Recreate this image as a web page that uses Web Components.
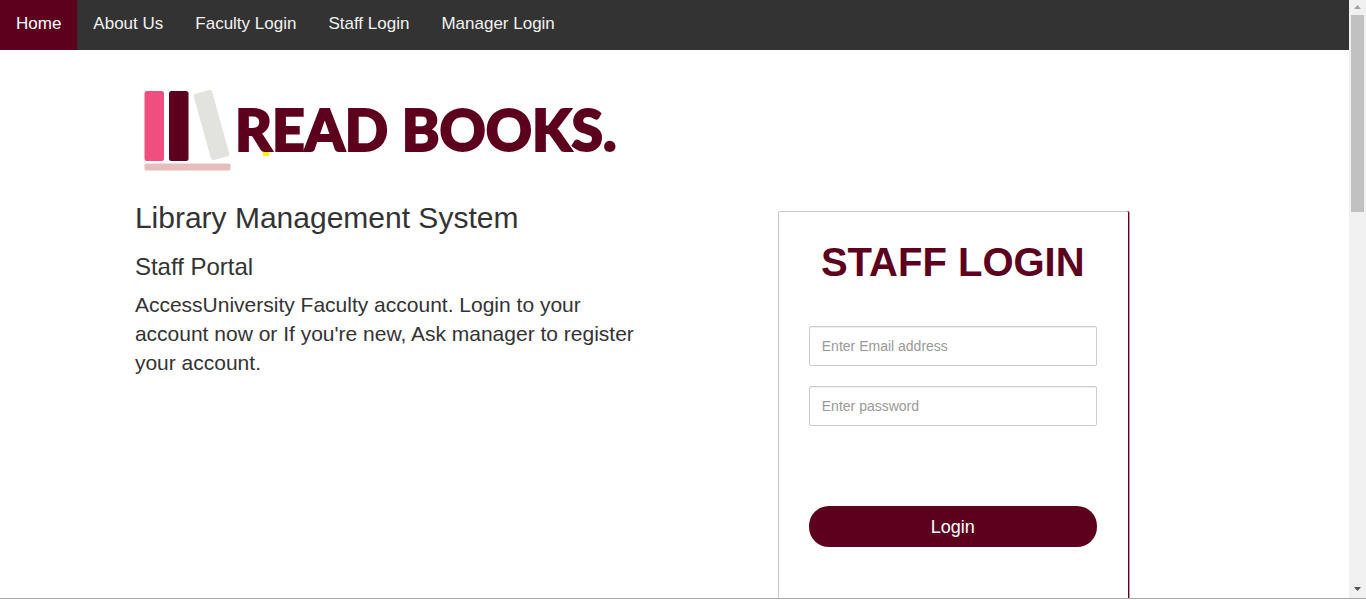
<!DOCTYPE html>
<html lang="en">
<head>
<meta charset="utf-8">
<title>Library Management System</title>
<style>
html, body { margin: 0; height: 100%; }
body { background: #fff; color: #333; font: 14px/20px "Liberation Sans", Arial, sans-serif; overflow: hidden; }
</style>
</head>
<body>
<library-page></library-page>
<script>
const define = (name, html, setup) => customElements.define(name, class extends HTMLElement {
  constructor() {
    super();
    this.attachShadow({ mode: "open" }).innerHTML = html;
  }
  connectedCallback() { if (setup) setup(this, this.shadowRoot); }
});

define("nav-link", `
<style>
:host { display: block; }
a { display: block; padding: 12px 16px 14px; color: #f2f2f2; font-size: 17px; line-height: 24px; text-decoration: none; }
:host([active]) a { background: #5c001d; color: #fff; }
</style>
<a href="#"><slot></slot></a>`);

define("top-nav", `
<style>
:host { display: block; background: #333; }
nav { display: flex; }
</style>
<nav>
  <nav-link active>Home</nav-link>
  <nav-link>About Us</nav-link>
  <nav-link>Faculty Login</nav-link>
  <nav-link>Staff Login</nav-link>
  <nav-link>Manager Login</nav-link>
</nav>`);

define("brand-logo", `
<style>
:host { display: block; }
svg { display: block; overflow: visible; }
text { font: 900 57px Lato, sans-serif; fill: #5c001d; stroke: #5c001d; stroke-width: 2px; }
</style>
<svg width="500" height="100" viewBox="0 0 500 100" role="img" aria-label="Read Books">
  <rect x="9.500" y="11" width="19.500" height="70" rx="2.500" fill="#f04e7f"/>
  <rect x="34" y="11" width="19.500" height="70" rx="2.500" fill="#5c001d"/>
  <rect x="-9.500" y="-34.500" width="19" height="69" rx="2.500" fill="#e2e2de" transform="translate(76.500 45) rotate(-15.500)"/>
  <rect x="9.500" y="83.500" width="86" height="7" rx="1.500" fill="#e6bfbc"/>
  <rect x="128" y="71" width="6" height="5" fill="#fff200"/>
  <text x="100" y="71">READ BOOKS.</text>
</svg>`);

define("portal-intro", `
<style>
:host { display: block; }
h1, h2, p { margin: 0; font-weight: 400; }
h1 { font-size: 30px; line-height: 33px; }
h2 { margin-top: 20px; font-size: 24px; line-height: 26px; }
p { margin-top: 10px; font-size: 21px; line-height: 29px; }
</style>
<h1>Library Management System</h1>
<h2>Staff Portal</h2>
<p>AccessUniversity Faculty account. Login to your account now or If you're new, Ask manager to register your account.</p>`);

define("form-field", `
<style>
:host { display: block; position: relative; }
label { position: absolute; width: 1px; height: 1px; overflow: hidden; clip-path: inset(50%); }
input { display: block; box-sizing: border-box; width: 100%; height: 40px; padding: 6px 12px; border: 1px solid #ccc; border-radius: 2px; background: #fff; color: #555; font: inherit; box-shadow: inset 0 1px 1px rgba(0,0,0,.07); }
input::placeholder { color: #999; opacity: 1; }
</style>
<label for="field"></label>
<input id="field">`, (host, root) => {
  const input = root.querySelector("input");
  input.type = host.getAttribute("type");
  input.placeholder = host.getAttribute("prompt");
  root.querySelector("label").setAttribute("aria-label", host.getAttribute("prompt"));
});

define("login-card", `
<style>
:host { display: block; box-sizing: border-box; padding: 30px; border: 1px solid #d3c3c9; border-right-color: #fff; border-radius: 2px; box-shadow: 1px 0 #5c001d, 2px 0 #cf8fa5; }
form { display: grid; gap: 20px; padding-bottom: 60px; }
h2 { margin: -2px 0 22px; color: #5c001d; font-size: 40px; line-height: 44px; text-align: center; white-space: nowrap; }
button { height: 41px; margin-top: 60px; border: 0; border-radius: 20px; background: #5c001d; color: #fff; font: inherit; font-size: 18px; cursor: pointer; }
</style>
<form>
  <h2>STAFF LOGIN</h2>
  <form-field type="email" prompt="Enter Email address"></form-field>
  <form-field type="password" prompt="Enter password"></form-field>
  <button type="button">Login</button>
</form>`);

define("page-scrollbar", `
<style>
:host { display: flex; flex-direction: column; align-items: center; background: #f1f1f1; }
.thumb { width: 13px; height: 33%; margin-top: 6px; background: #c1c1c1; }
svg { display: block; flex: none; }
.up { margin-top: 5px; }
.down { margin-top: auto; margin-bottom: 7px; }
</style>
<svg class="up" width="7" height="4"><path d="M0 4L3.500 0L7 4Z" fill="#a3a3a3"/></svg>
<div class="thumb"></div>
<svg class="down" width="7" height="4"><path d="M0 0H7L3.500 4Z" fill="#505050"/></svg>`);

define("library-page", `
<style>
:host { display: grid; grid-template-columns: minmax(0, 1fr) 17px; box-sizing: border-box; height: calc(100vh - 1px); border-bottom: 1px solid #a9a9a9; }
.view { overflow: hidden; }
main { padding: 30px 10% 0; }
.columns { display: grid; grid-template-columns: minmax(0, 504px) 350px; justify-content: space-between; padding-right: 8%; margin-top: 21px; }
login-card { margin-top: 10px; }
</style>
<div class="view">
  <top-nav></top-nav>
  <main>
    <brand-logo></brand-logo>
    <div class="columns">
      <portal-intro></portal-intro>
      <login-card></login-card>
    </div>
  </main>
</div>
<page-scrollbar></page-scrollbar>`);
</script>
</body>
</html>
